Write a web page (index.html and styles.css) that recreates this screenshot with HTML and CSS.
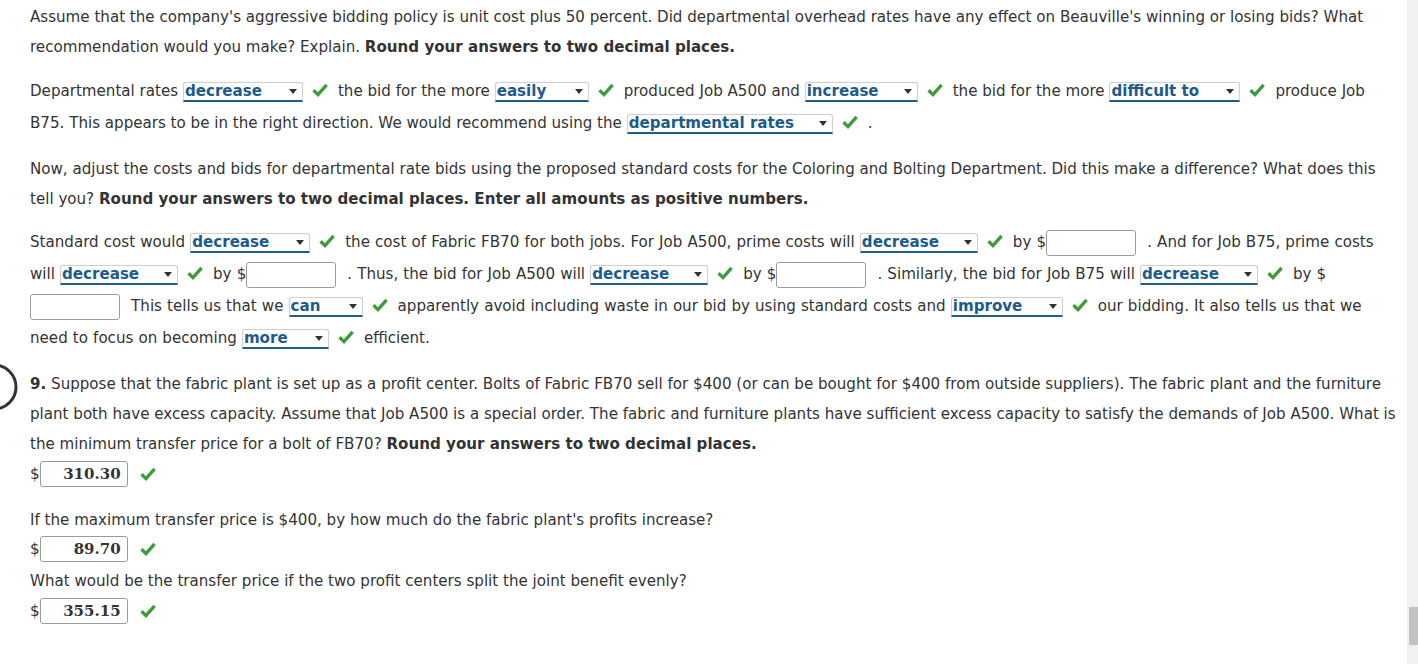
FILE: index.html
```html
<!DOCTYPE html>
<html>
<head>
<meta charset="utf-8">
<link rel="stylesheet" href="styles.css">
</head>
<body>
<div class="page">
<p class="p1">Assume that the company's aggressive bidding policy is unit cost plus 50 percent. Did departmental overhead rates have any effect on Beauville's winning or losing bids? What recommendation would you make? Explain. <b>Round your answers to two decimal places.</b></p>

<p class="p2">Departmental rates <span class="dd w120">decrease</span><svg class="ck" viewBox="0 0 16 16"><path d="M1.5 8.3 L6 12.6 L14.6 2.8"/></svg>the bid for the more <span class="dd w94">easily</span><svg class="ck" viewBox="0 0 16 16"><path d="M1.5 8.3 L6 12.6 L14.6 2.8"/></svg>produced Job A500 and <span class="dd w113">increase</span><svg class="ck" viewBox="0 0 16 16"><path d="M1.5 8.3 L6 12.6 L14.6 2.8"/></svg>the bid for the more <span class="dd w131">difficult to</span><svg class="ck" viewBox="0 0 16 16"><path d="M1.5 8.3 L6 12.6 L14.6 2.8"/></svg>produce Job B75. This appears to be in the right direction. We would recommend using the <span class="dd w206">departmental rates</span><svg class="ck" viewBox="0 0 16 16"><path d="M1.5 8.3 L6 12.6 L14.6 2.8"/></svg>.</p>

<p class="p3">Now, adjust the costs and bids for departmental rate bids using the proposed standard costs for the Coloring and Bolting Department. Did this make a difference? What does this tell you? <b>Round your answers to two decimal places. Enter all amounts as positive numbers.</b></p>

<p class="p4">Standard cost would <span class="dd w120">decrease</span><svg class="ck" viewBox="0 0 16 16"><path d="M1.5 8.3 L6 12.6 L14.6 2.8"/></svg>the cost of Fabric FB70 for both jobs. For Job A500, prime costs will <span class="dd w118">decrease</span><svg class="ck" viewBox="0 0 16 16"><path d="M1.5 8.3 L6 12.6 L14.6 2.8"/></svg>by $<span class="in"></span> . And for Job B75, prime costs will <span class="dd w118">decrease</span><svg class="ck" viewBox="0 0 16 16"><path d="M1.5 8.3 L6 12.6 L14.6 2.8"/></svg>by $<span class="in"></span> . Thus, the bid for Job A500 will <span class="dd w118">decrease</span><svg class="ck" viewBox="0 0 16 16"><path d="M1.5 8.3 L6 12.6 L14.6 2.8"/></svg>by $<span class="in"></span> . Similarly, the bid for Job B75 will <span class="dd w118">decrease</span><svg class="ck" viewBox="0 0 16 16"><path d="M1.5 8.3 L6 12.6 L14.6 2.8"/></svg>by $ <span class="in"></span> This tells us that we <span class="dd w74">can</span><svg class="ck" viewBox="0 0 16 16"><path d="M1.5 8.3 L6 12.6 L14.6 2.8"/></svg>apparently avoid including waste in our bid by using standard costs and <span class="dd w112">improve</span><svg class="ck" viewBox="0 0 16 16"><path d="M1.5 8.3 L6 12.6 L14.6 2.8"/></svg>our bidding. It also tells us that we need to focus on becoming <span class="dd w87">more</span><svg class="ck" viewBox="0 0 16 16"><path d="M1.5 8.3 L6 12.6 L14.6 2.8"/></svg>efficient.</p>

<div class="q9">
<svg class="qmark" viewBox="0 0 40 50"><circle cx="-6" cy="25" r="22"/></svg>
<p><b>9.</b> Suppose that the fabric plant is set up as a profit center. Bolts of Fabric FB70 sell for $400 (or can be bought for $400 from outside suppliers). The fabric plant and the furniture plant both have excess capacity. Assume that Job A500 is a special order. The fabric and furniture plants have sufficient excess capacity to satisfy the demands of Job A500. What is the minimum transfer price for a bolt of FB70? <b>Round your answers to two decimal places.</b></p>
<div class="ans a1"><span>$</span><span class="box">310.30</span><svg class="ck" viewBox="0 0 16 16"><path d="M1.5 8.3 L6 12.6 L14.6 2.8"/></svg></div>
<p class="sub s1">If the maximum transfer price is $400, by how much do the fabric plant's profits increase?</p>
<div class="ans a2"><span>$</span><span class="box">89.70</span><svg class="ck" viewBox="0 0 16 16"><path d="M1.5 8.3 L6 12.6 L14.6 2.8"/></svg></div>
<p class="sub s2">What would be the transfer price if the two profit centers split the joint benefit evenly?</p>
<div class="ans a3"><span>$</span><span class="box">355.15</span><svg class="ck" viewBox="0 0 16 16"><path d="M1.5 8.3 L6 12.6 L14.6 2.8"/></svg></div>
</div>
</div>
<div class="sb"><div class="sb-thumb"></div></div>
</body>
</html>
```

FILE: styles.css
```css
html, body {
  margin: 0;
  padding: 0;
  background: #fff;
}
body {
  font-family: "DejaVu Sans", Verdana, sans-serif;
  font-size: 15.1px;
  color: #333;
  overflow: hidden;
  height: 664px;
}
.page {
  position: relative;
  padding: 2px 0 0 30px;
  width: 1371px;
}
p { margin: 0; }
.p1 { line-height: 30px; }
.p2 { line-height: 32px; margin-top: 13px; }
.p3 { line-height: 30px; margin-top: 15px; }
.p4 { line-height: 32px; margin-top: 12px; word-spacing: 0.3px; }
.q9 { position: relative; line-height: 30px; margin-top: 15px; }

.dd {
  display: inline-block;
  position: relative;
  box-sizing: border-box;
  line-height: 17px;
  padding-left: 1px;
  background: #fff;
  border: 1px solid #cfcfcf;
  border-bottom: 2px solid #1f5d8c;
  border-radius: 3px 3px 0 0;
  box-shadow: 0 0 1px rgba(0,0,0,0.15);
  color: #1c5b8c;
  font-weight: bold;
  text-align: left;
  word-spacing: 0;
}
.dd::after {
  content: "";
  position: absolute;
  right: 5px;
  top: 6px;
  border-left: 4px solid transparent;
  border-right: 4px solid transparent;
  border-top: 5px solid #333;
}
.w74 { width: 74px; }
.w87 { width: 87px; }
.w94 { width: 94px; }
.w112 { width: 112px; }
.w113 { width: 113px; }
.w118 { width: 118px; }
.w120 { width: 120px; }
.w131 { width: 131px; }
.w206 { width: 206px; }

.ck {
  width: 16px;
  height: 16px;
  vertical-align: -2px;
  margin: 0 10px 0 9px;
  fill: none;
  stroke: #3c9b3c;
  stroke-width: 3.3;
}

.in {
  display: inline-block;
  box-sizing: border-box;
  width: 90px;
  height: 26px;
  border: 1px solid #9a9a9a;
  border-radius: 3px;
  background: #fff;
  vertical-align: middle;
  margin-right: 6px;
}

.qmark {
  position: absolute;
  left: -30px;
  top: -7px;
  width: 40px;
  height: 50px;
  fill: none;
  stroke: #333;
  stroke-width: 3;
}

.ans {
  display: flex;
  align-items: center;
  height: 26px;
}
.ans .box {
  box-sizing: border-box;
  width: 88px;
  height: 26px;
  line-height: 24px;
  border: 1px solid #9a9a9a;
  border-radius: 3px;
  padding-right: 6px;
  font-family: "DejaVu Serif", serif;
  font-weight: bold;
  font-size: 15px;
  text-align: right;
}
.ans .ck { margin-left: 12px; }
.a1 { margin-top: 2px; }
.s1 { margin-top: 18px; }
.a2 { margin-top: 1px; }
.s2 { margin-top: 4px; }
.a3 { margin-top: 2px; }

.sb {
  position: fixed;
  top: 0;
  right: 0;
  width: 11px;
  height: 664px;
  background: #f1f1f1;
}
.sb-thumb {
  position: absolute;
  left: 2px;
  right: 0;
  top: 607px;
  height: 38px;
  background: #c1c1c1;
}
```
